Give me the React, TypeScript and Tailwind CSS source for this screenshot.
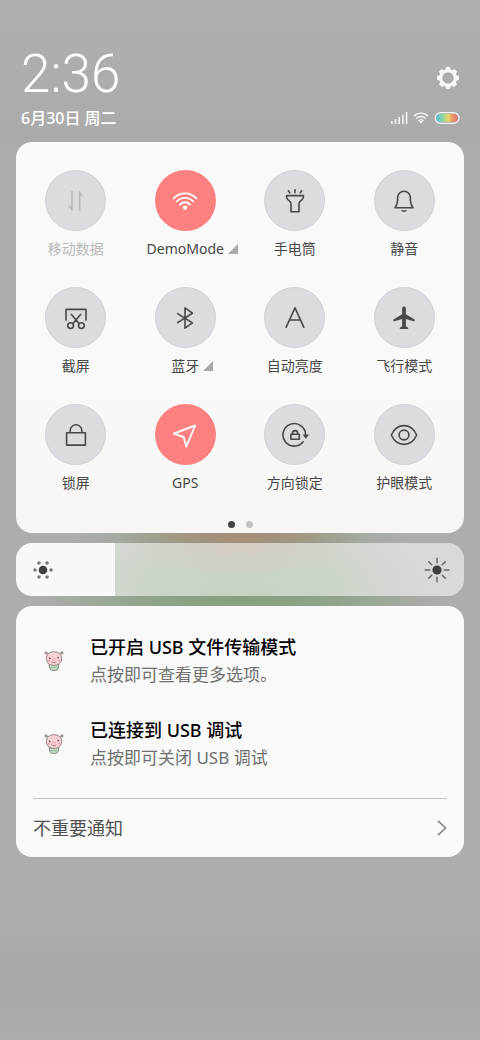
import React, { useState } from "react";

type Tile = {
  id: string;
  label: string;
  icon: React.ReactNode;
  active?: boolean;
  disabled?: boolean;
  expandable?: boolean;
};

type Notice = {
  id: number;
  title: string;
  text: string;
};

const tiles: Tile[] = [
  {
    id: "data",
    label: "移动数据",
    disabled: true,
    icon: (
      <>
        <path d="M12 6v19.5M19.7 26V6.5" strokeLinecap="butt" />
        <path d="M12.8 26.200v-4L7.600 20.300zM18.900 5.800v4l5.200 1.900z" fill="currentColor" stroke="none" />
      </>
    ),
  },
  {
    id: "wifi",
    label: "DemoMode",
    active: true,
    expandable: true,
    icon: (
      <>
        <path d="M4.600 13.400a15.400 15.400 0 0 1 22.800 0M7.900 16.400a11 11 0 0 1 16.200 0M11.100 19.500a6.600 6.600 0 0 1 9.800 0" strokeWidth="1.900" />
        <circle cx="16" cy="22.600" r="2.200" fill="currentColor" stroke="none" />
      </>
    ),
  },
  {
    id: "torch",
    label: "手电筒",
    icon: (
      <path d="M7.600 10.600h16.800v1.600c0 3-4.400 3.200-4.400 6.400v8.200h-8v-8.200c0-3.200-4.400-3.400-4.400-6.400zM16 4.800v3M9.300 5.800l1.500 2M22.700 5.800l-1.500 2" />
    ),
  },
  {
    id: "mute",
    label: "静音",
    icon: (
      <>
        <path d="M9.700 12.500a6.300 6.300 0 0 1 12.600 0c0 5.500.6 7.500 2.700 10.300H7c2.100-2.800 2.700-4.800 2.700-10.300z" />
        <path d="M13 25.300h6c-.5 1.100-1.600 1.600-3 1.600s-2.500-.5-3-1.600z" fill="currentColor" stroke="none" />
      </>
    ),
  },
  {
    id: "shot",
    label: "截屏",
    icon: (
      <>
        <path d="M6 18.300V7.400h20v10.900M11.300 12.300l7.500 9M20.700 12.300l-7.500 9" />
        <circle cx="10.600" cy="23.600" r="2.900" />
        <circle cx="21.400" cy="23.600" r="2.900" />
      </>
    ),
  },
  {
    id: "bluetooth",
    label: "蓝牙",
    expandable: true,
    icon: <path d="M8.600 11.600l14.800 9.300L16 26.200V5.900l7.400 5.300-14.800 9.400" />,
  },
  {
    id: "auto",
    label: "自动亮度",
    icon: <path d="M7.200 25.200L16 5.800l8.800 19.400M10.700 18h10.600" />,
  },
  {
    id: "flight",
    label: "飞行模式",
    icon: (
      <path
        d="M16 4.500c-1.200 0-1.900.9-1.900 2.200v5.500L5.400 17.600v1.900l8.700-2.500v7.300l-2.300 1.500v1.300h8.400v-1.300l-2.300-1.500V17l8.700 2.500v-1.900l-8.700-5.400V6.700c0-1.300-.7-2.200-1.900-2.200z"
        fill="currentColor"
        stroke="none"
      />
    ),
  },
  {
    id: "lock",
    label: "锁屏",
    icon: <path d="M6.600 13.800h18.800v12.300H6.600zM10.200 13.800v-2.200a5.800 5.800 0 0 1 11.600 0v2.200" />,
  },
  {
    id: "gps",
    label: "GPS",
    active: true,
    icon: <path d="M26.200 6.500L4.800 14.700l9.900 3.300 2.500 9.600z" strokeWidth="1.900" />,
  },
  {
    id: "rotate",
    label: "方向锁定",
    icon: (
      <>
        <path d="M24.200 22.800A11.300 11.300 0 1 1 26.600 16" />
        <path d="M23.700 15.600h6.200l-3.100 4.300z" fill="currentColor" stroke="none" />
        <path d="M11.900 15.300h8.400v5h-8.400zM13.600 15.300v-1.200a2.500 2.500 0 0 1 5 0v1.200" />
      </>
    ),
  },
  {
    id: "eye",
    label: "护眼模式",
    icon: (
      <>
        <path d="M3.300 16C6 10 10.600 6.600 16 6.600S26 10 28.700 16C26 22 21.400 25.400 16 25.400S6 22 3.300 16z" />
        <circle cx="16" cy="16" r="4.900" />
      </>
    ),
  },
];

const notices: Notice[] = [
  { id: 1, title: "已开启 USB 文件传输模式", text: "点按即可查看更多选项。" },
  { id: 2, title: "已连接到 USB 调试", text: "点按即可关闭 USB 调试" },
];

function StatusIcons() {
  return (
    <div className="flex items-center gap-[5px]">
      <svg width="17" height="12" viewBox="0 0 17 12" fill="#f4f4f4">
        <rect x="0" y="9" width="1.600" height="3" />
        <rect x="3.700" y="7" width="1.600" height="5" />
        <rect x="7.400" y="5" width="1.600" height="7" />
        <rect x="11.100" y="2.600" width="1.600" height="9.400" />
        <rect x="14.800" y="0" width="1.600" height="12" />
      </svg>
      <svg width="16" height="12" viewBox="0 0 16 12" fill="none" stroke="#f4f4f4" strokeWidth="1.400">
        <path d="M.8 4.200a10 10 0 0 1 14.400 0M3.100 6.600a6.900 6.900 0 0 1 9.800 0M5.400 8.900a3.700 3.700 0 0 1 5.200 0" />
        <path d="M6.300 9.800a2.300 2.300 0 0 1 3.400 0L8 11.800z" fill="#f4f4f4" stroke="none" />
      </svg>
      <svg width="26" height="12" viewBox="0 0 26 12">
        <defs>
          <linearGradient id="battery">
            <stop offset="0" stopColor="#4fc9d8" />
            <stop offset="0.300" stopColor="#8fd4a4" />
            <stop offset="0.550" stopColor="#e6d265" />
            <stop offset="0.800" stopColor="#e8916a" />
            <stop offset="1" stopColor="#df7474" />
          </linearGradient>
        </defs>
        <rect x="1.200" y=".7" width="23.800" height="10.600" rx="5.300" fill="none" stroke="#f4f4f4" strokeWidth="1.200" />
        <rect x="2.500" y="2" width="21.200" height="8" rx="4" fill="url(#battery)" />
      </svg>
    </div>
  );
}

function GearIcon() {
  return (
    <svg width="24" height="24" viewBox="-12 -12 24 24" fill="#f8f8f8">
      <circle r="7.400" fill="none" stroke="#f8f8f8" strokeWidth="3.200" />
      <path d="M-2.700-8h5.400l-.8-2.900h-3.800zM-2.700 8h5.400l-.8 2.900h-3.800z" />
      <path d="M-2.700-8h5.400l-.8-2.900h-3.800zM-2.700 8h5.400l-.8 2.900h-3.800z" transform="rotate(45)" />
      <path d="M-2.700-8h5.400l-.8-2.900h-3.800zM-2.700 8h5.400l-.8 2.900h-3.800z" transform="rotate(90)" />
      <path d="M-2.700-8h5.400l-.8-2.900h-3.800zM-2.700 8h5.400l-.8 2.900h-3.800z" transform="rotate(135)" />
    </svg>
  );
}

function PigIcon() {
  return (
    <svg width="20" height="20" viewBox="0 0 20 20" className="shrink-0">
      <g stroke="#77706f" strokeWidth=".8">
        <path d="M4.600 3.600L2.300 2M15.400 3.600l2.300-1.600" fill="none" />
        <circle cx="2" cy="1.900" r="1.100" fill="#d7c3c3" />
        <circle cx="18" cy="1.900" r="1.100" fill="#d7c3c3" />
        <path d="M5 13.400h10l-1 4.500c-.4 1.100-1.500 1.600-4 1.600s-3.600-.5-4-1.600z" fill="#c4dfc9" />
        <path d="M10 .8c4.800 0 7.600 2.400 7.600 6.800 0 4.200-2.800 6.800-7.600 6.800S2.400 11.800 2.400 7.600C2.400 3.200 5.200.8 10 .8z" fill="#f9d0d6" />
      </g>
      <circle cx="5.800" cy="7.400" r=".8" fill="#4a4040" />
      <circle cx="14.200" cy="6.600" r=".8" fill="#4a4040" />
      <ellipse cx="10" cy="8.400" rx="1.900" ry="1.300" fill="#f5bac3" />
      <path d="M7.700 10.900c1.500 1 3.200.9 4.600-.1" fill="none" stroke="#8a5f63" strokeWidth=".7" />
      <circle cx="4.900" cy="9.900" r=".9" fill="#f19aa6" />
      <circle cx="15.100" cy="9.700" r=".9" fill="#f19aa6" />
      <path d="M5.800 16.700h8.400" stroke="#84aa8c" strokeWidth=".7" />
    </svg>
  );
}

function QuickTile({ tile }: { tile: Tile }) {
  return (
    <button
      type="button"
      disabled={tile.disabled}
      className={`flex flex-col items-center gap-2 ${tile.disabled ? "text-[#b9b9b9]" : "text-[#484848]"}`}
    >
      <span
        className={`flex size-[61px] items-center justify-center rounded-full ${
          tile.active ? "bg-[#fd8080] text-white" : "border border-[#d2d0d3] bg-[#dddbdf]"
        }`}
      >
        <svg
          width="32"
          height="32"
          viewBox="0 0 32 32"
          fill="none"
          stroke="currentColor"
          strokeWidth="1.600"
          strokeLinecap="round"
          strokeLinejoin="round"
        >
          {tile.icon}
        </svg>
      </span>
      <span className="relative text-sm leading-5">
        {tile.label}
        {tile.expandable && (
          <svg width="10" height="10" viewBox="0 0 10 10" className="absolute top-[5px] left-full ml-1">
            <path d="M10 0v10H0z" fill="#a9a9a9" />
          </svg>
        )}
      </span>
    </button>
  );
}

function BrightnessSlider() {
  const [level, setLevel] = useState(22);

  return (
    <div className="bg-[radial-gradient(ellipse_120px_44px_at_50%_0%,#a68c76_0%,#a68c7699_50%,#a68c7600_100%),radial-gradient(ellipse_200px_110px_at_50%_90%,#84a17c_0%,#84a17ccc_40%,#84a17c00_100%)] px-4 py-2.5">
      <div className="relative h-[53px] overflow-hidden rounded-2xl">
        <input
          type="range"
          min={0}
          max={100}
          value={level}
          aria-label="亮度"
          onChange={(e) => setLevel(Number(e.target.value))}
          className="block h-full w-full cursor-pointer appearance-none [&::-webkit-slider-thumb]:appearance-none [&::-webkit-slider-thumb]:size-8 [&::-webkit-slider-thumb]:opacity-0"
          style={{
            background: `linear-gradient(to right, #f7f8f7 ${level}%, rgba(255,255,255,0.54) ${level}%)`,
          }}
        />
        <svg
          width="26"
          height="26"
          viewBox="-13 -13 26 26"
          className="pointer-events-none absolute top-[14px] left-[14px]"
          fill="#7b7b7b"
        >
          <circle r="4.300" fill="#404040" />
          <circle cx="-8" r="1.800" />
          <circle cx="8" r="1.800" />
          <circle cx="-4" cy="-7" r="1.800" />
          <circle cx="4" cy="-7" r="1.800" />
          <circle cx="-4" cy="7" r="1.800" />
          <circle cx="4" cy="7" r="1.800" />
        </svg>
        <svg
          width="26"
          height="26"
          viewBox="-13 -13 26 26"
          className="pointer-events-none absolute top-[14px] right-[14px]"
          stroke="#666"
          strokeWidth="1.500"
          strokeLinecap="round"
        >
          <circle r="4.600" fill="#3d3d3d" stroke="none" />
          <path d="M0-11.800v4.600M0 7.200v4.600M-11.800 0h4.600M7.200 0h4.600M-8.300-8.300l3.100 3.100M5.200 5.200l3.100 3.100M-8.300 8.300l3.100-3.100M5.200-5.200l3.100-3.100" />
        </svg>
      </div>
    </div>
  );
}

export default function App() {
  return (
    <main className="min-h-screen bg-[#adadad] bg-[linear-gradient(to_bottom,#b0b0b0_0%,#acabab_12%,#adadad_55%,#afaeae_85%,#a8a8a8_95%,#acacac_100%)] pb-10 font-['Noto_Sans','Noto_Sans_CJK_SC',sans-serif]">
      {/* HEADER */}
      <header className="flex flex-col pt-11 pr-5 pl-[21px] text-white">
        <div className="flex items-center justify-between">
          <time className="font-['Roboto','Noto_Sans',sans-serif] text-[53px] leading-[60px] font-light">2:36</time>
          <button type="button" aria-label="设置" className="mt-2">
            <GearIcon />
          </button>
        </div>
        <div className="mt-[2px] flex items-center justify-between">
          <p className="text-base leading-6 font-medium">6月30日 周二</p>
          <StatusIcons />
        </div>
      </header>

      {/* QUICK SETTINGS */}
      <section className="mx-4 mt-3 rounded-2xl bg-[linear-gradient(to_bottom,#f9f9f9_60%,#f7f6f5)] px-[5px] pt-7 pb-[5px]">
        <div className="grid grid-cols-4 gap-y-7">
          {tiles.map((tile) => (
            <QuickTile key={tile.id} tile={tile} />
          ))}
        </div>
        <div className="mt-7 flex justify-center gap-[11px]">
          <span className="size-[7px] rounded-full bg-[#444]" />
          <span className="size-[7px] rounded-full bg-[#c2c2c2]" />
        </div>
      </section>

      <BrightnessSlider />

      {/* NOTIFICATIONS */}
      <section className="mx-4 rounded-2xl bg-[#f9f9f9] px-[17px]">
        <ul className="flex flex-col gap-[29px] pt-7 pb-[27px]">
          {notices.map((n) => (
            <li key={n.id} className="flex items-center gap-[26px] pl-[11px]">
              <PigIcon />
              <div>
                <h2 className="text-lg leading-[27px] font-medium text-black">{n.title}</h2>
                <p className="text-[17px] leading-[27px] text-[#707070]">{n.text}</p>
              </div>
            </li>
          ))}
        </ul>
        <button
          type="button"
          className="flex h-[59px] w-full items-center justify-between border-t border-[#c6c6c6] text-lg text-[#505050]"
        >
          不重要通知
          <svg width="10" height="16" viewBox="0 0 10 16" fill="none" stroke="#858585" strokeWidth="1.600">
            <path d="M1 .8L8.600 8 1 15.200" />
          </svg>
        </button>
      </section>
    </main>
  );
}
